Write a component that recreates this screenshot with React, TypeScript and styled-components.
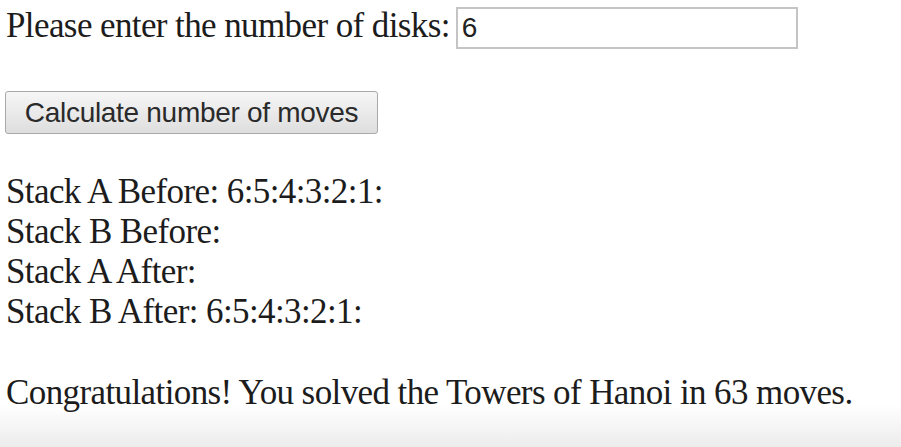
import React from "react";
import styled, { createGlobalStyle } from "styled-components";

const Global = createGlobalStyle`
  html, body { margin: 0; padding: 0; background: #ffffff; }
  body { width: 901px; height: 447px; overflow: hidden; }
`;

const Page = styled.div`
  position: relative;
  width: 901px;
  height: 447px;
  box-sizing: border-box;
  padding: 5px 0 0 6px;
  font-family: "Liberation Serif", "Times New Roman", serif;
  font-size: 35px;
  line-height: 40px;
  letter-spacing: -0.6px;
  color: #1c1c1c;
  background: linear-gradient(to bottom, #ffffff 0px, #ffffff 405px, #ececec 447px);
`;

const Row = styled.div`
  display: flex;
  align-items: center;
  gap: 6px;
  height: 46px;
`;

const Label = styled.span`
  white-space: nowrap;
  margin-top: -5px;
`;

const Input = styled.input`
  box-sizing: border-box;
  width: 342px;
  height: 42px;
  margin: 0;
  padding: 0 4px;
  border: 2px solid #c4c4c4;
  background: #fff;
  font-family: "Liberation Sans", Arial, sans-serif;
  font-size: 28px;
  letter-spacing: 0;
  color: #222;
  outline: none;
`;

const Button = styled.button`
  display: block;
  box-sizing: border-box;
  width: 373px;
  height: 43px;
  margin: 40px 0 0 -1px;
  padding: 0;
  border: 1px solid #a9a9a9;
  border-radius: 3px;
  background: linear-gradient(to bottom, #f6f6f6, #dedede);
  font-family: "Liberation Sans", Arial, sans-serif;
  font-size: 28px;
  letter-spacing: -0.3px;
  color: #2a2a2a;
`;

const Output = styled.div`
  margin-top: 38px;
`;

const Line = styled.div`
  white-space: nowrap;
`;

const Message = styled.div`
  margin-top: 41px;
  white-space: nowrap;
`;

export default function App() {
  return (
    <>
      <Global />
      <Page>
        <Row>
          <Label>Please enter the number of disks:</Label>
          <Input type="text" defaultValue="6" />
        </Row>
        <Button type="button">Calculate number of moves</Button>
        <Output>
          <Line>Stack A Before: 6:5:4:3:2:1:</Line>
          <Line>Stack B Before:</Line>
          <Line>Stack A After:</Line>
          <Line>Stack B After: 6:5:4:3:2:1:</Line>
        </Output>
        <Message>Congratulations! You solved the Towers of Hanoi in 63 moves.</Message>
      </Page>
    </>
  );
}
